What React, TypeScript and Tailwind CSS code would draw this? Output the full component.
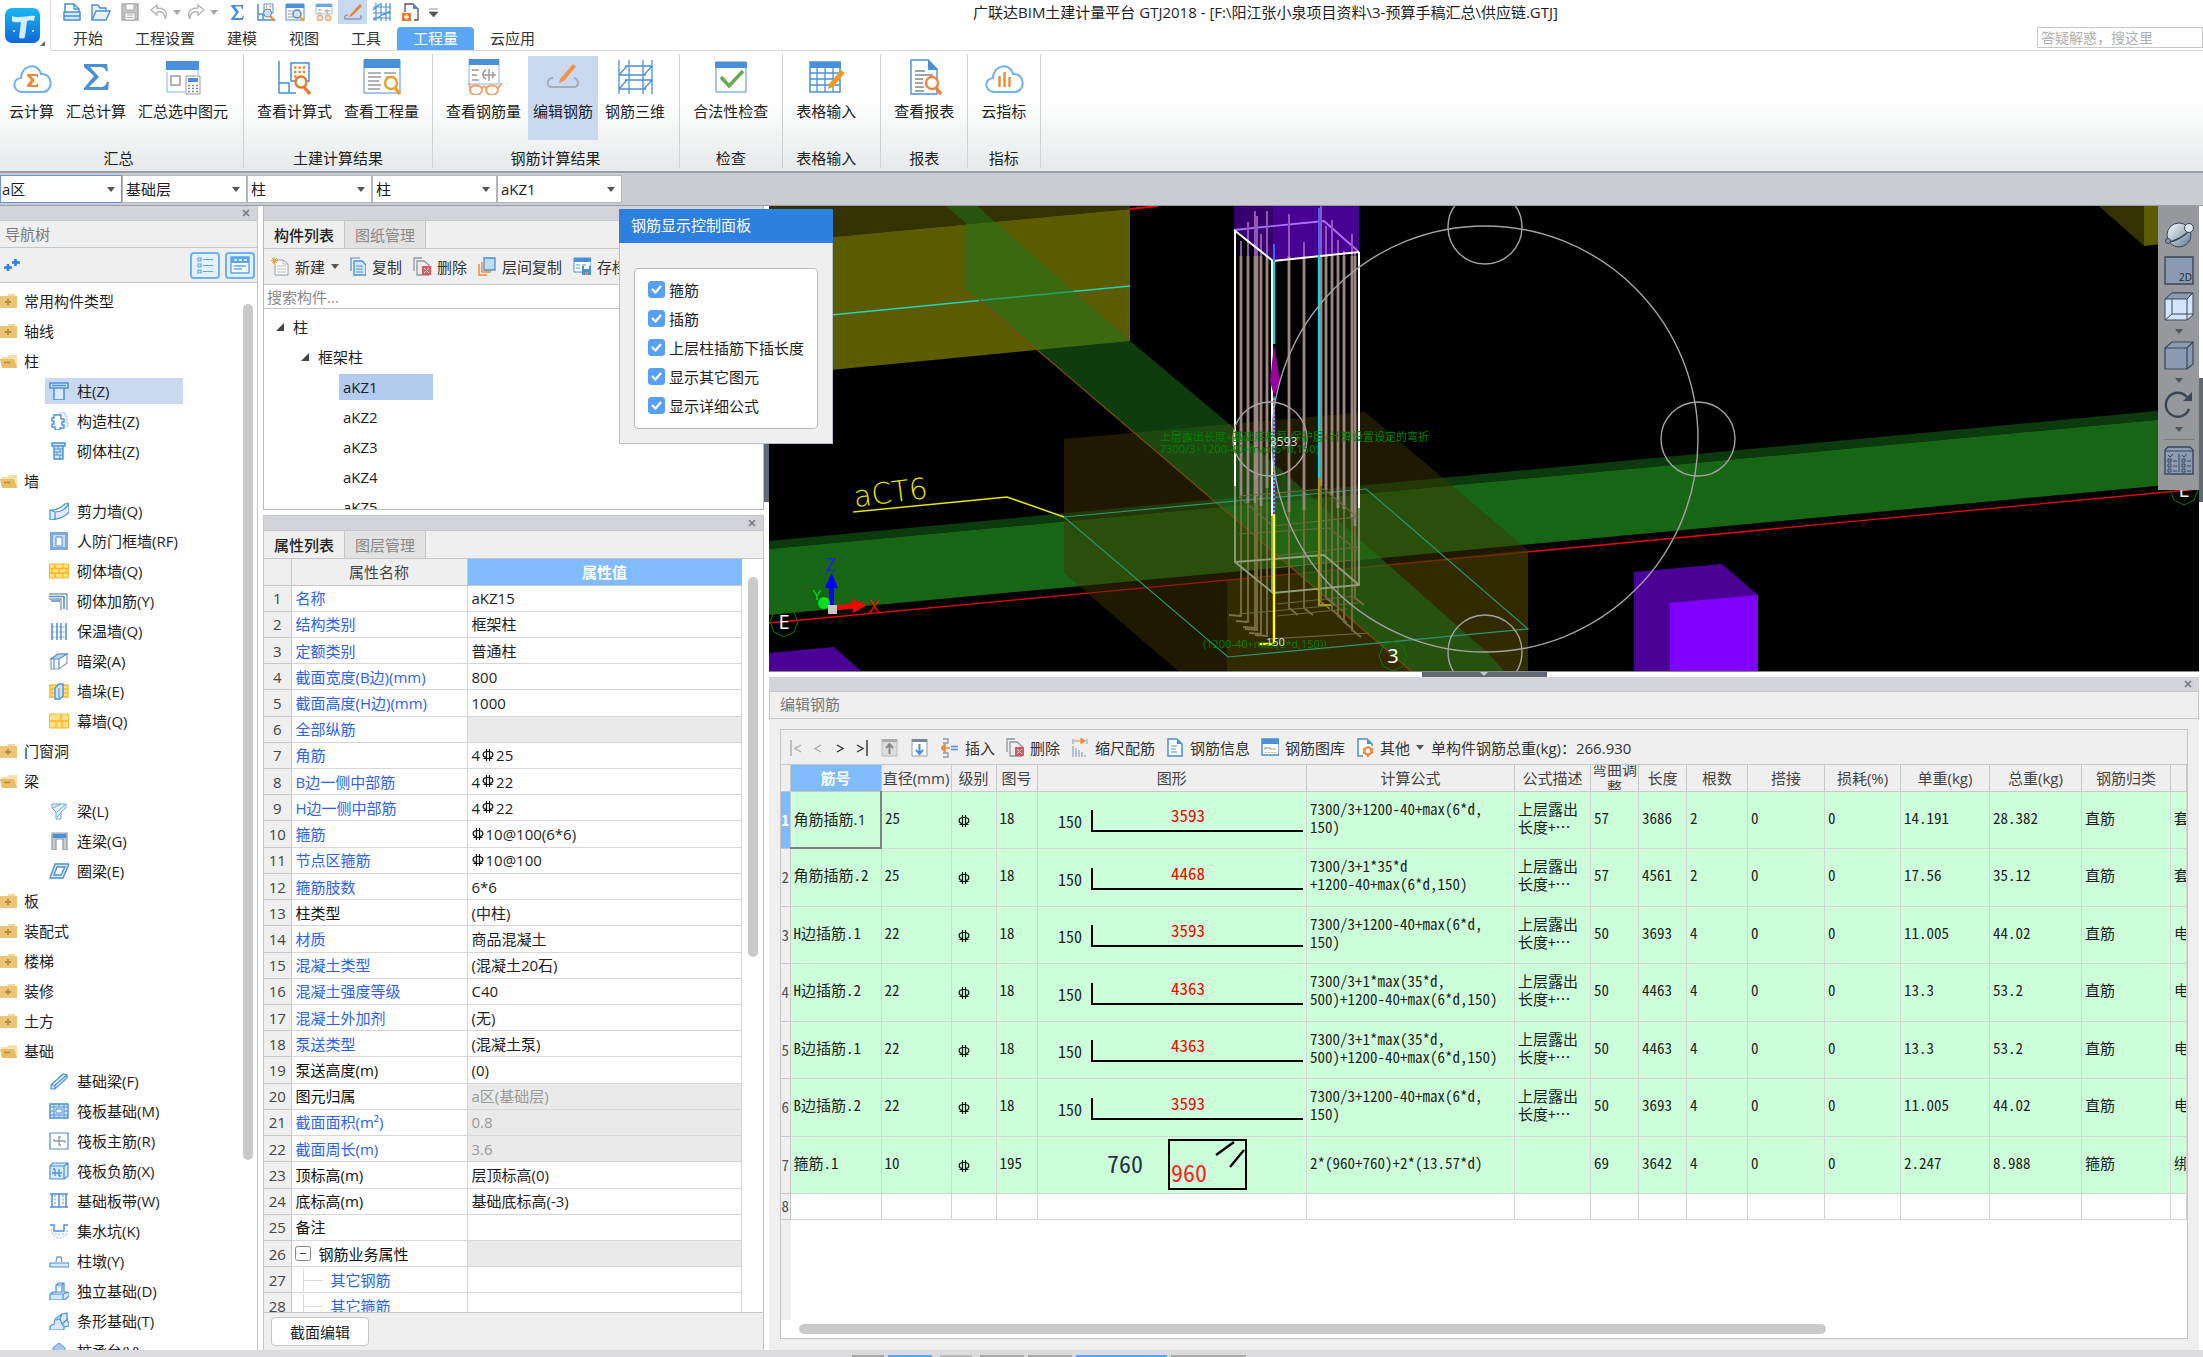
import { useState } from 'react'
import type { ReactNode } from 'react'

const BLUE = '#4a90d9'
const LIGHT = '#d6e8fb'
const ORANGE = '#f0883a'
const GRAY = '#8e99a3'

/* ---------- small shared parts ---------- */

interface SvgProps {
  w: number
  h: number
  children: ReactNode
  className?: string
}

function Svg({ w, h, children, className = '' }: SvgProps) {
  return (
    <svg width={w} height={h} viewBox={`0 0 ${w} ${h}`} fill="none" className={`shrink-0 ${className}`} aria-hidden="true">
      {children}
    </svg>
  )
}

function Caret({ className = '' }: { className?: string }) {
  return (
    <Svg w={8} h={5} className={className}>
      <path d="M0 0h8L4 5z" fill="#555" />
    </Svg>
  )
}

function PanelStrip({ closable = false }: { closable?: boolean }) {
  return (
    <div className="flex h-[15px] shrink-0 items-center justify-end border-b border-[#c3c7cc] bg-[#d3d4d9] pr-[7px]">
      {closable && (
        <button type="button" aria-label="关闭">
          <Svg w={8} h={8}>
            <path d="M1 1l6 6M7 1L1 7" stroke="#777" strokeWidth="1.6" />
          </Svg>
        </button>
      )}
    </div>
  )
}

/* ---------- title bar ---------- */

const quickIcons: Record<string, ReactNode> = {
  new: (
    <>
      <path d="M3 10V2h9l5 5v3" fill="#fff" stroke={BLUE} strokeWidth="1.5" />
      <path d="M12 2v5h5" stroke={BLUE} strokeWidth="1.4" />
      <path d="M2 10h16v8H2zM2 14h16" fill={LIGHT} stroke={BLUE} strokeWidth="1.5" />
    </>
  ),
  open: <path d="M1 18V3h6l2 3h6v3M1 18l4-9h14l-4 9z" fill="#e9f3fe" stroke={BLUE} strokeWidth="1.4" />,
  save: (
    <>
      <path d="M2 2h16v16H2z" fill="#c3c3c3" stroke="#aaa" strokeWidth="1.4" />
      <path d="M6 2h8v6H6zM5 11h10v7H5z" fill="#fff" stroke="#aaa" />
      <path d="M7 13h6M7 15.500h6" stroke="#aaa" />
    </>
  ),
  undo: <path d="M8 3L2 8l6 5v-3c5-1 8 1 8 7 3-6 1-11-8-11z" fill="#fff" stroke="#b3b3b3" strokeWidth="1.3" />,
  redo: <path d="M12 3l6 5-6 5v-3c-5-1-8 1-8 7-3-6-1-11 8-11z" fill="#fff" stroke="#b3b3b3" strokeWidth="1.3" />,
  sum: <path d="M4 3h12v4h-1l-1-2.500H8l4 5.500-4.500 6H15l1-2.500h1L16 18H4v-1l5-6.500L4 4z" fill={BLUE} />,
  formula: (
    <>
      <path d="M2 2v16h16M2 12h5v6" stroke={BLUE} strokeWidth="1.5" />
      <path d="M8 2h9v9H8z" fill="#fff" stroke={BLUE} />
      <path d="M10 4.500h1.500M13.500 4.500H15M10 7.500h1.500M13.500 7.500H15" stroke={ORANGE} strokeWidth="1.5" />
      <circle cx="11.500" cy="11" r="4" fill="#cfe1f5" stroke="#5b84b8" />
      <path d="M14 14l5 5" stroke={ORANGE} strokeWidth="2.400" />
    </>
  ),
  quantity: (
    <>
      <path d="M1 2h18v16H1z" fill="#fff" stroke={BLUE} />
      <path d="M1 2h18v4H1z" fill={BLUE} />
      <path d="M3 9h5M3 12h4M3 15h5" stroke="#99a" />
      <circle cx="12" cy="12" r="4" fill="#cfe1f5" stroke="#5b84b8" strokeWidth="1.5" />
      <path d="M15 15l4 4" stroke="#f0a020" strokeWidth="2.400" />
    </>
  ),
  rebar: (
    <>
      <path d="M2 2h16v10H2z" fill="#fff" stroke="#9bbde6" />
      <path d="M2 2h16v3H2z" fill="#6fa5e3" />
      <path d="M4 8h4M4 11h3M10 9h6M13 7v5" stroke="#999" />
      <circle cx="6" cy="16" r="2.500" stroke="#f5a773" strokeWidth="1.5" />
      <circle cx="14" cy="16" r="2.500" stroke="#f5a773" strokeWidth="1.5" />
    </>
  ),
  edit: (
    <>
      <path d="M7 13L17 2l2 2L9 14l-3 1z" fill="#ee7d33" />
      <path d="M5 13c-3 0-4 2-3 4h15c2-1 2-3 0-3" stroke={GRAY} strokeWidth="1.4" />
    </>
  ),
  grid: <path d="M4 1v18M9 1v18M14 1v18M18 1v18M1 5h18M1 11h18M1 16h18M1 8l7-6M1 18l17-9" stroke={BLUE} strokeWidth="1.2" />,
  addpage: (
    <>
      <path d="M4 10V2h8l5 5v11h-4" stroke="#456" strokeWidth="1.3" />
      <path d="M12 2v5h5z" fill={BLUE} />
      <path d="M1 11h9v8H1z" fill="#e9792e" />
      <path d="M5.500 12.500v5M3 15h5" stroke="#fff" strokeWidth="1.5" />
    </>
  )
}

function QuickButton({ name, label, active = false }: { name: string; label: string; active?: boolean }) {
  return (
    <button type="button" aria-label={label} className={`flex h-6 w-[29px] items-center justify-center ${active ? 'bg-[#c9d9f0]' : ''}`}>
      <Svg w={20} h={20}>{quickIcons[name]}</Svg>
    </button>
  )
}

function AppLogo() {
  return (
    <div className="flex h-[50px] w-[51px] shrink-0 items-end border-r border-[#ddd] pb-1 pl-1">
      <svg width="42" height="42" viewBox="0 0 42 42" aria-label="GTJ">
        <defs>
          <linearGradient id="logo" x1="0" y1="0" x2="0" y2="1">
            <stop offset="0" stopColor="#19b7f3" />
            <stop offset="1" stopColor="#0f68d8" />
          </linearGradient>
        </defs>
        <rect x="1" y="4" width="35" height="35" rx="7" fill="url(#logo)" />
        <path d="M8 12c7 3 16-1 23 0l-1 5c-3-1-5-1-7 0l-2 16c-1 2-5 2-6 0l2-15c-4 0-7 1-9-1z" fill="#e9f7ff" opacity=".9" />
        <circle cx="10" cy="27" r="1" fill="#fff" />
        <circle cx="29" cy="27" r="1" fill="#fff" />
        <path d="M41 37v5h-5z" fill="#666" />
      </svg>
    </div>
  )
}

const menuTabs = ['开始', '工程设置', '建模', '视图', '工具', '工程量', '云应用']

function TitleBar() {
  const [tab, setTab] = useState('工程量')
  return (
    <header className="flex shrink-0 bg-white">
      <AppLogo />
      <div className="min-w-0 flex-1 border-b border-[#d9dadb]">
        <div className="flex h-[27px] items-start pl-[6px]">
          <div className="flex w-[916px] shrink-0 items-center">
            <QuickButton name="new" label="新建" />
            <QuickButton name="open" label="打开" />
            <QuickButton name="save" label="保存" />
            <QuickButton name="undo" label="撤销" />
            <Caret className="opacity-50" />
            <QuickButton name="redo" label="恢复" />
            <Caret className="mr-1 opacity-50" />
            <QuickButton name="sum" label="汇总计算" />
            <QuickButton name="formula" label="查看计算式" />
            <QuickButton name="quantity" label="查看工程量" />
            <QuickButton name="rebar" label="查看钢筋量" />
            <QuickButton name="edit" label="编辑钢筋" active />
            <QuickButton name="grid" label="钢筋三维" />
            <QuickButton name="addpage" label="查看报表" />
            <Svg w={9} h={9} className="ml-1">
              <path d="M0 1h9M0 4h9L4.500 9z" stroke="#555" fill="#555" strokeWidth=".6" />
            </Svg>
          </div>
          <h1 className="truncate leading-6">广联达BIM土建计量平台 GTJ2018 - [F:\阳江张小泉项目资料\3-预算手稿汇总\供应链.GTJ]</h1>
        </div>
        <nav className="flex h-[23px] items-stretch pl-[6px]">
          {menuTabs.map((name) => (
            <button
              key={name}
              type="button"
              onClick={() => setTab(name)}
              className={`px-4 leading-[21px] ${tab === name ? 'rounded-t-sm bg-[#5ba6f8] text-white' : 'text-[#333]'}`}
            >
              {name}
            </button>
          ))}
          <input
            aria-label="搜索帮助"
            placeholder="答疑解惑，搜这里"
            className="ml-auto h-[21px] w-[166px] border border-[#c8c8c8] px-[3px] text-sm outline-none placeholder:text-[#b0b0b0]"
          />
        </nav>
      </div>
    </header>
  )
}

/* ---------- ribbon ---------- */

const cloud = <path d="M10 33c-10-1-10-13-1-14C9 7 25 2 29 15c12-1 13 17 2 18z" stroke="#6db0f5" strokeWidth="2" />

const ribbonIcons: Record<string, ReactNode> = {
  cloudSum: (
    <>
      {cloud}
      <path d="M15 15h11v4l-2-2h-5l4 4-4 5h5l2-2v4H15v-2l4-5-4-4z" fill={ORANGE} />
    </>
  ),
  sum: <path d="M8 5h23l1 7h-2c-1-3-3-4-5-4H14l9 10-10 10h12c3 0 5-2 6-5h2l-1 8H8v-2l10-12L8 8z" fill={BLUE} />,
  select: (
    <>
      <path d="M4 3h31v13M4 13v20h18" stroke="#8bb4e6" />
      <path d="M3 2h33v9H3z" fill={BLUE} />
      <path d="M8 17h9v9H8z" stroke="#999" strokeWidth="1.5" />
      <path d="M23 17h14v18H23z" fill="#fff" stroke="#999" />
      <path d="M25 19h10v4H25z" fill={BLUE} />
      <path d="M25 26.500h10M25 29.500h10M25 32.500h10" stroke="#888" strokeWidth="1.5" strokeDasharray="2 2" />
    </>
  ),
  formula: (
    <>
      <path d="M4 2v32h17M4 24h10v10M4 23v-4" stroke={BLUE} strokeWidth="1.5" />
      <path d="M16 4h18v18H16z" stroke={BLUE} strokeWidth="1.5" />
      <path d="M19 8.500h12M19 13h12M19 17.500h4" stroke={ORANGE} strokeWidth="2.400" strokeDasharray="2.400 2" />
      <circle cx="26" cy="23" r="5.500" fill="#fff" stroke="#e9792e" strokeWidth="2.400" />
      <path d="M29 28l6 7" stroke="#e9792e" strokeWidth="3.400" />
    </>
  ),
  quantity: (
    <>
      <path d="M2 1h36v33H2z" stroke={BLUE} />
      <path d="M2 0h36v9H2z" fill={BLUE} />
      <path d="M6 14h13M6 18h13M6 22h11M6 26h13M6 30h12M22 14h12M24 18h6" stroke="#999" strokeWidth="1.400" />
      <circle cx="29" cy="24" r="6" fill="#fff" stroke="#f09a20" strokeWidth="2.400" />
      <path d="M33 29l5 6" stroke="#f09a20" strokeWidth="3.400" />
    </>
  ),
  rebar: (
    <>
      <path d="M5 1h30v24H5z" stroke="#8bb4e6" />
      <path d="M5 0h30v6H5z" fill={BLUE} />
      <path d="M8 11h7M8 16h5M8 21h7M18 16h14M25 10v12M22 11c-4 2-4 7 0 9M28 13c2 1 2 4 0 6" stroke="#999" strokeWidth="1.400" />
      <path d="M6 31c0-6 12-6 12 0s-12 7-12 0zm16 0c0-6 12-6 12 0s-12 7-12 0zM18 29c1-2 3-2 4 0M6 29l-1-5M34 29l4-5" fill="#fff" stroke="#f5a06a" strokeWidth="2" />
    </>
  ),
  edit: (
    <>
      <path d="M17 20L30 5l3 2.500L21 22l-5 2z" fill="#f5924a" />
      <path d="M10 19c-6 0-7 8-2 9h24c4-1 4-8-1-9" stroke="#a5adb8" strokeWidth="2" />
    </>
  ),
  grid: (
    <path d="M4 1v34M14 1v34M28 1v34M37 1v34M10 7h27M4 16h27M10 21h27M4 30h27M4 16l8-9M29 16l8-9M4 30l8-9M29 30l8-9" stroke={BLUE} strokeWidth="1.300" />
  ),
  check: (
    <>
      <path d="M5 3h30v30H5z" fill="#fff" stroke={BLUE} />
      <path d="M4 3h32v6H4z" fill={BLUE} />
      <path d="M10 18l8 9 14-15" stroke="#6aaa4e" strokeWidth="3.500" />
    </>
  ),
  table: (
    <>
      <path d="M4 3h30v30H4z" fill="#fff" stroke={BLUE} strokeWidth="1.500" />
      <path d="M4 3h31v6H4z" fill={BLUE} />
      <path d="M4 14h30M4 20h30M4 26h30M11 9v24M19 9v24M27 9v24" stroke={BLUE} strokeWidth="1.300" />
      <path d="M23 25L35 11l4 3-12 14-5 2z" fill="#f09a20" />
    </>
  ),
  report: (
    <>
      <path d="M7 1h17l9 9v25H7z" fill="#fff" stroke={BLUE} strokeWidth="1.400" />
      <path d="M24 0v11h10z" fill={BLUE} />
      <path d="M11 12h10M11 16h18M11 20h8M11 24h8M11 28h9M11 32h9" stroke="#888" strokeWidth="1.400" />
      <circle cx="28" cy="24" r="6" fill="#fff" stroke="#f0823a" strokeWidth="2.400" />
      <path d="M32 29l5 6" stroke="#f0823a" strokeWidth="3.400" />
    </>
  ),
  cloudBars: (
    <>
      {cloud}
      <path d="M15.500 17v11M20.500 13v15M25.500 18v10" stroke={ORANGE} strokeWidth="2.400" />
    </>
  )
}

interface RibbonGroup {
  label: string
  className: string
  items: { icon: string; label: string }[]
}

const ribbonGroups: RibbonGroup[] = [
  {
    label: '汇总',
    className: 'pl-1 pr-[10px]',
    items: [
      { icon: 'cloudSum', label: '云计算' },
      { icon: 'sum', label: '汇总计算' },
      { icon: 'select', label: '汇总选中图元' }
    ]
  },
  {
    label: '土建计算结果',
    className: 'px-2',
    items: [
      { icon: 'formula', label: '查看计算式' },
      { icon: 'quantity', label: '查看工程量' }
    ]
  },
  {
    label: '钢筋计算结果',
    className: 'pl-2 pr-[9px]',
    items: [
      { icon: 'rebar', label: '查看钢筋量' },
      { icon: 'edit', label: '编辑钢筋' },
      { icon: 'grid', label: '钢筋三维' }
    ]
  },
  { label: '检查', className: 'pl-2 pr-[9px]', items: [{ icon: 'check', label: '合法性检查' }] },
  { label: '表格输入', className: 'pl-2 pr-[19px]', items: [{ icon: 'table', label: '表格输入' }] },
  { label: '报表', className: 'px-2', items: [{ icon: 'report', label: '查看报表' }] },
  { label: '指标', className: 'pl-2 pr-[9px]', items: [{ icon: 'cloudBars', label: '云指标' }] }
]

function Ribbon() {
  return (
    <div className="flex h-[120px] shrink-0 bg-linear-to-b from-white from-40% to-[#e6eaea]">
      {ribbonGroups.map((group) => (
        <section key={group.label} className={`my-[3px] flex flex-col border-r border-[#cdd0d2] pt-[2px] ${group.className}`}>
          <div className="flex gap-[2px]">
            {group.items.map((item) => (
              <button
                key={item.label}
                type="button"
                className={`flex h-[84px] flex-col items-center px-[5px] pt-[3px] ${item.icon === 'edit' ? 'bg-[#c9d9f0]' : ''}`}
              >
                <Svg w={40} h={36}>{ribbonIcons[item.icon]}</Svg>
                <span className="mt-[6px] leading-5 whitespace-nowrap">{item.label}</span>
              </button>
            ))}
          </div>
          <div className="mt-2 text-center leading-5">{group.label}</div>
        </section>
      ))}
    </div>
  )
}

const combos = [
  { label: '区域', value: 'a区' },
  { label: '楼层', value: '基础层' },
  { label: '构件大类', value: '柱' },
  { label: '构件类型', value: '柱' },
  { label: '构件', value: 'aKZ1' }
]

function ComboBar() {
  return (
    <div className="flex h-[35px] shrink-0 border-t-2 border-b border-[#989ea4] bg-[#c9ccd1] pt-[2px]">
      {combos.map((combo, i) => (
        <div key={combo.label} className={`relative h-[28px] ${i === 0 ? 'w-[122px]' : 'w-[125px]'}`}>
          <select
            aria-label={combo.label}
            defaultValue={combo.value}
            className={`size-full appearance-none border bg-white pr-5 outline-none ${i === 0 ? 'border-[#6f92dc] pl-[1px]' : 'border-[#b4b7ba] pl-[3px]'}`}
          >
            <option>{combo.value}</option>
          </select>
          <Caret className="pointer-events-none absolute top-3 right-[7px]" />
        </div>
      ))}
    </div>
  )
}

/* ---------- navigation tree ---------- */

const treeIcons: Record<string, ReactNode> = {
  column: <path d="M1 1h18v5H1zM5 6h10v12H5zM3 3.500h14" fill="#d9e7f8" stroke={BLUE} strokeWidth="1.500" />,
  tieColumn: (
    <>
      <path d="M9 1h7v3h2v4h-1v3h2v3h-3" stroke="#a8c8ee" />
      <path d="M5 3h7v4h3v3h-2v3h2v3h-4v2H6v-3H3v-3h2v-3H3V6h2z" fill="#fff" stroke={BLUE} strokeWidth="1.400" />
    </>
  ),
  brickColumn: (
    <>
      <path d="M3 1h13v3H3zM5 4h9v13H5z" fill={LIGHT} stroke={BLUE} strokeWidth="1.400" />
      <path d="M5 7h9M5 10h9M5 13h9M9 4v3M11 7v3M8 10v3M11 13v4" stroke={BLUE} />
    </>
  ),
  shearWall: <path d="M1 8c7 1 11-2 15-6l4-1v9c-4 5-9 7-19 8zM1 8l5 2c6 0 9-2 14-8M6 10v7" fill="#dfedfc" stroke={BLUE} strokeWidth="1.200" />,
  doorWall: (
    <>
      <path d="M1 0h18v18H1z" fill="#7fabe2" />
      <path d="M4 3h12v12H4z" fill="#c6dcf5" />
      <path d="M7 5h6v9H7z" fill="#fff" stroke={BLUE} />
    </>
  ),
  brickWall: (
    <>
      <path d="M.500 2h19v14H.500z" fill="#ffe08c" stroke="#fbb622" />
      <path d="M0 6.500h20M0 11h20M6 2v4.500M14 2v4.500M10 6.500V11M3 6.500V11M17 6.500V11M6 11v5M14 11v5" stroke="#fbb622" strokeWidth="1.400" />
    </>
  ),
  brickRebar: (
    <>
      <path d="M0 2h18v16M0 7h12v11" stroke={GRAY} strokeWidth="1.400" />
      <path d="M0 4.500h15V17M2 9h9" stroke={BLUE} strokeWidth="1.600" />
    </>
  ),
  insulation: (
    <>
      <path d="M3 1v17M8 1v17M12 1v17M17 1v17" stroke={BLUE} strokeWidth="1.500" />
      <path d="M3 5h14M3 10h14M3 15h14" stroke={BLUE} strokeDasharray="2 1.500" />
    </>
  ),
  hiddenBeam: (
    <>
      <path d="M2 7l7-5h9v9l-8 6H2z" fill="#fff" stroke={GRAY} strokeWidth="1.200" />
      <path d="M2 7l7-5h9l-8 5zM5 7v10M10 7v10" fill="#bcd7f5" stroke={BLUE} strokeWidth="1.200" />
    </>
  ),
  pier: (
    <>
      <path d="M1 3h18v12H1zM1 7h18M1 11h18" fill="#ffe08c" stroke="#fbb622" strokeWidth="1.400" />
      <path d="M6 6l4-4h4v12l-3 3H6z" fill="#cfe2f8" stroke={BLUE} strokeWidth="1.400" />
      <path d="M10 6v10" stroke={BLUE} />
    </>
  ),
  curtain: (
    <>
      <path d="M.500 2h19v14H.500z" fill="#ffe08c" stroke="#fbb622" />
      <path d="M0 9h20M12 2v7M7 9v7M13 9v7" stroke="#fbb622" strokeWidth="1.400" />
    </>
  ),
  beam: <path d="M3 2h14v4l-5 4v7H7v-7L3 6zM4 6l8-4M8 10l8-7M8 15l4-4" stroke="#6aa3e0" fill="#e6f1fd" />,
  linkBeam: (
    <>
      <path d="M3 1h15v17h-4V7H7v11H3z" fill="#c9ced3" stroke={GRAY} strokeWidth="1.200" />
      <path d="M4 2h13v4H4z" fill={BLUE} />
    </>
  ),
  ringBeam: <path d="M6 2h14l-6 14H1zM8 5h8l-4 8H5z" fill="#d9e9fb" stroke={BLUE} strokeWidth="1.400" fillRule="evenodd" />,
  foundBeam: <path d="M2 13L14 2l4 1v3L6 17H2zM2 13h4l12-10M6 13v4" fill={LIGHT} stroke={BLUE} strokeWidth="1.200" />,
  raft: (
    <>
      <path d="M1 2h18v14H1z" fill={LIGHT} stroke={BLUE} strokeWidth="1.400" />
      <path d="M1 5h18M1 13h18M5 2v14M15 2v14M10 2v3M10 13v3M1 9h4M15 9h4" stroke={BLUE} />
      <path d="M7 7h6v4H7z" fill="#fff" stroke={BLUE} />
    </>
  ),
  raftMain: (
    <>
      <path d="M1 1h18v16H1z" fill="#fff" stroke={BLUE} strokeWidth="1.200" />
      <path d="M5 9h11M10 5v8M12 5h-2v8h2M5 7v2M16 9v2" stroke={GRAY} strokeWidth="1.300" />
    </>
  ),
  raftNeg: (
    <>
      <path d="M1 4h14v13H1zM1 4l3-3h15v13l-4 3M15 4l4-3" fill={LIGHT} stroke={BLUE} strokeWidth="1.200" />
      <path d="M3 11h10M6 7v7M10 7v7M4 7h2M10 14h2" stroke={BLUE} strokeWidth="1.300" />
    </>
  ),
  strip: (
    <>
      <path d="M1 2h18M1 15h18M10 2v13M3 2v13M17 2v13" stroke={BLUE} strokeWidth="1.500" />
      <path d="M6 3v11M14 3v11" stroke={BLUE} strokeDasharray="2 1.500" />
    </>
  ),
  sump: (
    <>
      <path d="M1 3h4v6h10V3h4" stroke={BLUE} strokeWidth="1.500" />
      <path d="M2 7l2 6 4 3h5l4-3 2-6M6 12h9" stroke="#8fb2d8" strokeDasharray="2 1.500" />
    </>
  ),
  pedestal: (
    <>
      <path d="M7 10l1-5h4l1 5" stroke={GRAY} strokeWidth="1.300" />
      <path d="M1 11h19v4H1z" fill={LIGHT} stroke={BLUE} strokeWidth="1.200" />
    </>
  ),
  isolated: <path d="M1 12l3-2h3V3l3-2h5v9h3l2 1v3l-4 4H1zM1 12h13l5-2M7 10h6V3M14 12v6M7 3h6l2-2" fill={LIGHT} stroke={BLUE} strokeWidth="1.200" />,
  stripFound: <path d="M1 18v-4l4-2 1-5 7-5 5-1v7l2 3v3l-5 1v3zM13 2l-2 5-4 1M11 7l2 5 2 2M13 12l6-5" fill={LIGHT} stroke={BLUE} strokeWidth="1.200" />,
  cap: <path d="M10 1l6 5v8H4V6z" fill="#a9cbf1" stroke={BLUE} />
}

interface NavNode {
  label: string
  open?: boolean
  children?: [string, string][]
}

const navTree: NavNode[] = [
  { label: '常用构件类型' },
  { label: '轴线' },
  { label: '柱', open: true, children: [['column', '柱(Z)'], ['tieColumn', '构造柱(Z)'], ['brickColumn', '砌体柱(Z)']] },
  {
    label: '墙',
    open: true,
    children: [
      ['shearWall', '剪力墙(Q)'],
      ['doorWall', '人防门框墙(RF)'],
      ['brickWall', '砌体墙(Q)'],
      ['brickRebar', '砌体加筋(Y)'],
      ['insulation', '保温墙(Q)'],
      ['hiddenBeam', '暗梁(A)'],
      ['pier', '墙垛(E)'],
      ['curtain', '幕墙(Q)']
    ]
  },
  { label: '门窗洞' },
  { label: '梁', open: true, children: [['beam', '梁(L)'], ['linkBeam', '连梁(G)'], ['ringBeam', '圈梁(E)']] },
  { label: '板' },
  { label: '装配式' },
  { label: '楼梯' },
  { label: '装修' },
  { label: '土方' },
  {
    label: '基础',
    open: true,
    children: [
      ['foundBeam', '基础梁(F)'],
      ['raft', '筏板基础(M)'],
      ['raftMain', '筏板主筋(R)'],
      ['raftNeg', '筏板负筋(X)'],
      ['strip', '基础板带(W)'],
      ['sump', '集水坑(K)'],
      ['pedestal', '柱墩(Y)'],
      ['isolated', '独立基础(D)'],
      ['stripFound', '条形基础(T)'],
      ['cap', '桩承台(V)']
    ]
  }
]

function Folder({ open = false }: { open?: boolean }) {
  return (
    <Svg w={18} h={16}>
      {open ? (
        <>
          <path d="M1 4h6l2-2h8v13H3z" fill="#f6dfab" />
          <path d="M0 6h14l3 9H2z" fill="#e9bd68" />
          <path d="M4 9.500h6" stroke="#b98b34" strokeWidth="1.500" />
        </>
      ) : (
        <>
          <path d="M8 1h7v3H8z" fill="#f3d79a" />
          <path d="M0 3h17v12H0z" fill="#ecc478" />
          <path d="M8 6v6M5 9h6" stroke="#b98b34" strokeWidth="1.800" />
        </>
      )}
    </Svg>
  )
}

function NavigationPanel() {
  const [selected, setSelected] = useState('柱(Z)')
  return (
    <aside className="flex w-[258px] shrink-0 flex-col border-r border-[#c3c7cc] bg-white">
      <PanelStrip closable />
      <h2 className="h-[27px] shrink-0 border-b border-[#c3c7cc] bg-[#efefef] pl-[5px] leading-[26px] text-[#7a7a7a]">导航树</h2>
      <div className="flex h-[35px] shrink-0 items-center gap-[5px] border-b border-[#c3c7cc] bg-[#efefef] pr-[2px] pl-1">
        <button type="button" aria-label="展开" className="mr-auto">
          <Svg w={16} h={14}>
            <path d="M4 6v7M0 9.500h8M11.500 1v7M8 4.500h8" stroke="#2f7fe0" strokeWidth="2.600" />
          </Svg>
        </button>
        <button type="button" aria-label="列表" className="flex h-[27px] w-[30px] items-center justify-center rounded-[4px] border-2 border-[#6db0f5] bg-[#e4f0fd]">
          <Svg w={16} h={17}>
            <path d="M1 1h3v3H1zM1 7h3v3H1zM1 13h3v3H1zM6 2.500h10M6 8.500h10M6 14.500h10" stroke="#5ba6f8" strokeWidth="1.200" />
          </Svg>
        </button>
        <button type="button" aria-label="图标" className="flex h-[27px] w-[30px] items-center justify-center rounded-[4px] border-2 border-[#6db0f5] bg-[#e4f0fd]">
          <Svg w={20} h={18}>
            <path d="M1 1h18v16H1z" fill="#fff" stroke="#5ba6f8" strokeWidth="1.500" />
            <path d="M1 1h18v6H1z" fill="#5ba6f8" />
            <path d="M4 4h3M9 4h3M14 4h3" stroke="#fff" strokeWidth="1.500" />
            <path d="M4 10h12M4 13h8" stroke="#5ba6f8" strokeWidth="1.300" />
          </Svg>
        </button>
      </div>
      <div className="flex min-h-0 flex-1">
        <ul className="flex-1 overflow-hidden pt-[3px]">
          {navTree.map((node) => (
            <li key={node.label}>
              <button type="button" className="flex h-[30px] items-center gap-[6px]">
                <Folder open={node.open} />
                {node.label}
              </button>
              {node.children?.map(([icon, label]) => (
                <div key={label} className="flex h-[30px] items-center pl-[45px]">
                  <button
                    type="button"
                    onClick={() => setSelected(label)}
                    className={`flex h-[26px] w-[138px] items-center gap-[8px] pl-1 ${selected === label ? 'bg-[#c9d9f0]' : ''}`}
                  >
                    <Svg w={20} h={18}>{treeIcons[icon]}</Svg>
                    {label}
                  </button>
                </div>
              ))}
            </li>
          ))}
        </ul>
        <div className="mt-[21px] mr-1 h-[856px] w-[10px] rounded-full bg-[#cacaca]" />
      </div>
    </aside>
  )
}

/* ---------- component list + properties ---------- */

const toolIcons: Record<string, ReactNode> = {
  create: (
    <>
      <path d="M4 3h8l5 4v11H4z" fill="#fff" stroke={GRAY} />
      <path d="M12 3v4h5M6 9h9M6 12h9M6 15h9" stroke="#bbb" />
      <path d="M3 0v7M0 3.500h7M1 1l5 5M6 1L1 6" stroke="#f09a20" />
    </>
  ),
  copy: (
    <>
      <path d="M1 14V1h9" stroke={BLUE} strokeWidth="1.200" />
      <path d="M4 4h8l4 4v10H4z" fill={LIGHT} stroke={BLUE} strokeWidth="1.400" />
      <path d="M6 9h7M6 12h7M6 15h7" stroke={BLUE} />
    </>
  ),
  remove: (
    <>
      <path d="M1 14V1h8M4 4h7l5 4v10H4z" stroke={GRAY} strokeWidth="1.300" />
      <path d="M9 9h9v9H9z" fill="#e8545c" />
      <path d="M11 11l5 5M16 11l-5 5" stroke="#fff" />
    </>
  ),
  layers: (
    <>
      <path d="M1 7v11h8M4 5v10h9" stroke={ORANGE} strokeWidth="1.400" />
      <path d="M6 1h11v12H6z" fill="#bfdcfb" stroke={BLUE} strokeWidth="1.300" />
    </>
  ),
  archive: (
    <>
      <path d="M1 1h17v14H1z" fill="#fff" stroke={BLUE} />
      <path d="M1 1h17v4H1z" fill={BLUE} />
      <path d="M3 8h4M3 11h4M9 8h4" stroke={BLUE} />
      <path d="M9 9h9v9H9z" fill={BLUE} />
      <path d="M11 9h5v3h-5z" fill="#fff" />
      <path d="M12 15h3v3h-3z" fill={ORANGE} />
    </>
  ),
  insert: (
    <>
      <path d="M2 1h5v4H2M2 15h5v4H2" stroke={GRAY} strokeWidth="1.300" />
      <path d="M0 10l4-3.500v7zM3 10h6" fill={ORANGE} stroke={ORANGE} strokeWidth="1.500" />
      <path d="M10 8.500h7M10 11.500h7" stroke={BLUE} strokeWidth="1.500" />
    </>
  ),
  scale: (
    <>
      <path d="M2 1v5M2 8v11M5 10v9M8 12v7M11 14v5M14 17v2" stroke="#8fa3bd" strokeWidth="1.200" />
      <path d="M3 3h9M10 .500l4 2.500-4 2.500z" stroke={ORANGE} fill={ORANGE} strokeWidth="1.200" />
      <path d="M16 1v5" stroke="#8fa3bd" />
    </>
  ),
  info: (
    <>
      <path d="M2 1h9l5 5v12H2z" fill="#fff" stroke={BLUE} strokeWidth="1.500" />
      <path d="M11 1v5h5z" fill={BLUE} />
      <path d="M5 8h6M5 11h5M5 14h6" stroke={BLUE} />
    </>
  ),
  library: (
    <>
      <path d="M1 1h17v16H1z" fill="#fff" stroke={BLUE} strokeWidth="1.500" />
      <path d="M1 1h17v5H1z" fill={BLUE} />
      <path d="M4 9v3M4 10h5M9 9v2h6" stroke={GRAY} />
      <path d="M4 14.500h12" stroke="#f0b060" strokeDasharray="2 1" />
    </>
  ),
  other: (
    <>
      <path d="M16 8V6l-5-5H2v17h5" fill="#fff" stroke={BLUE} strokeWidth="1.500" />
      <path d="M11 1v5h5z" fill={BLUE} />
      <circle cx="12" cy="13" r="3.500" stroke="#f0883a" strokeWidth="2.200" />
      <path d="M12 8v2M12 17v2M7 11l2 1M15 14l2 1M7 15l2-1M15 12l2-1" stroke="#f0883a" strokeWidth="2" />
    </>
  )
}

function ToolButton({ icon, label, caret = false }: { icon: string; label: string; caret?: boolean }) {
  return (
    <button type="button" className="flex shrink-0 items-center gap-[6px] whitespace-nowrap text-[#333]">
      <Svg w={icon === 'copy' ? 16 : 18} h={20}>{toolIcons[icon]}</Svg>
      {label}
      {caret && <Caret />}
    </button>
  )
}

function PanelTabs({ tabs }: { tabs: string[] }) {
  return (
    <div className="flex h-7 shrink-0 border-b border-[#c3c7cc] bg-[#efefef]">
      {tabs.map((name, i) => (
        <button
          key={name}
          type="button"
          className={`w-[81px] border-r border-[#c3c7cc] ${i === 0 ? 'font-medium text-[#222]' : 'bg-[#e2e2e2] text-[#888]'}`}
        >
          {name}
        </button>
      ))}
    </div>
  )
}

function TreeArrow() {
  return (
    <Svg w={8} h={8}>
      <path d="M8 0v8H0z" fill="#444" />
    </Svg>
  )
}

function ComponentListPanel() {
  return (
    <section className="flex h-[304px] shrink-0 flex-col border border-t-0 border-[#b8bcc0] bg-white">
      <PanelStrip />
      <PanelTabs tabs={['构件列表', '图纸管理']} />
      <div className="flex h-9 shrink-0 items-center gap-[11px] overflow-hidden border-b border-[#c3c7cc] bg-[#efefef] pl-[7px]">
        <ToolButton icon="create" label="新建" caret />
        <ToolButton icon="copy" label="复制" />
        <ToolButton icon="remove" label="删除" />
        <ToolButton icon="layers" label="层间复制" />
        <ToolButton icon="archive" label="存档" caret />
      </div>
      <input
        aria-label="搜索构件"
        placeholder="搜索构件..."
        className="h-6 w-full shrink-0 border-b border-[#c3c7cc] bg-white px-[3px] outline-none placeholder:text-[#8a8a8a]"
      />
      <ul className="min-h-0 flex-1 overflow-hidden pt-[3px] leading-[30px]">
        <li className="flex h-[30px] items-center gap-[9px] pl-3"><TreeArrow />柱</li>
        <li className="flex h-[30px] items-center gap-[9px] pl-[37px]"><TreeArrow />框架柱</li>
        {['aKZ1', 'aKZ2', 'aKZ3', 'aKZ4', 'aKZ5'].map((name) => (
          <li key={name} className="flex h-[30px] items-center pl-[75px]">
            <button type="button" className={`h-[26px] w-[94px] pl-1 text-left leading-[25px] ${name === 'aKZ1' ? 'bg-[#b3ccee]' : ''}`}>
              {name}
            </button>
          </li>
        ))}
      </ul>
    </section>
  )
}

/** HRB400 grade mark: a circle crossed by two strokes, with a foot bar */
function GradeMark() {
  return (
    <svg width="12" height="13" viewBox="0 0 12 13" fill="none" stroke="#111" strokeWidth="1.200" className="inline-block" aria-label="HRB400">
      <path d="M4.500 2.500C0 3 0 8 4.500 8.500M7.500 2.500C12 3 12 8 7.500 8.500M4.500 2.500h3" />
      <path d="M4.500 0v12M7.500 0v12M1.500 9.500h9" />
    </svg>
  )
}

interface Property {
  name: string
  value?: string
  // 'k' marks the plain black private properties
  tone?: 'k'
  off?: boolean
  level?: number
}

const properties: Property[] = [
  { name: '名称', value: 'aKZ15' },
  { name: '结构类别', value: '框架柱' },
  { name: '定额类别', value: '普通柱' },
  { name: '截面宽度(B边)(mm)', value: '800' },
  { name: '截面高度(H边)(mm)', value: '1000' },
  { name: '全部纵筋', off: true },
  { name: '角筋', value: '4$25' },
  { name: 'B边一侧中部筋', value: '4$22' },
  { name: 'H边一侧中部筋', value: '4$22' },
  { name: '箍筋', value: '$10@100(6*6)' },
  { name: '节点区箍筋', value: '$10@100' },
  { name: '箍筋肢数', value: '6*6' },
  { name: '柱类型', value: '(中柱)', tone: 'k' },
  { name: '材质', value: '商品混凝土' },
  { name: '混凝土类型', value: '(混凝土20石)' },
  { name: '混凝土强度等级', value: 'C40' },
  { name: '混凝土外加剂', value: '(无)' },
  { name: '泵送类型', value: '(混凝土泵)' },
  { name: '泵送高度(m)', value: '(0)', tone: 'k' },
  { name: '图元归属', value: 'a区(基础层)', tone: 'k', off: true },
  { name: '截面面积(m²)', value: '0.8', off: true },
  { name: '截面周长(m)', value: '3.6', off: true },
  { name: '顶标高(m)', value: '层顶标高(0)', tone: 'k' },
  { name: '底标高(m)', value: '基础底标高(-3)', tone: 'k' },
  { name: '备注', tone: 'k' },
  { name: '钢筋业务属性', tone: 'k', off: true, level: 1 },
  { name: '其它钢筋', level: 2 },
  { name: '其它箍筋', level: 2 }
]

function PropertyValue({ value }: { value: string }) {
  if (!value.includes('$')) return <>{value}</>
  const [before, after] = value.split('$')
  return (
    <span className="flex items-center gap-[2px]">
      {before}
      <GradeMark />
      {after}
    </span>
  )
}

function PropertyPanel() {
  return (
    <section className="flex min-h-0 flex-1 flex-col border-x border-t border-[#c3c7cc] bg-[#efefef]">
      <PanelStrip closable />
      <PanelTabs tabs={['属性列表', '图层管理']} />
      <div className="flex min-h-0 flex-1 overflow-hidden border-b border-[#c3c7cc] bg-white">
        <table className="h-[761px] flex-1 table-fixed border-collapse">
          <colgroup>
            <col className="w-[27px]" />
            <col className="w-[176px]" />
            <col />
          </colgroup>
          <thead>
            <tr className="h-[26px] bg-[#efefef] text-[#444]">
              <th className="border-r border-b border-[#c8c8c8]" aria-label="序号" />
              <th className="border-r border-b border-[#c8c8c8] p-0 font-normal">属性名称</th>
              <th className="border-b border-[#c8c8c8] bg-[#80bbfb] p-0 font-bold text-white">属性值</th>
            </tr>
          </thead>
          <tbody>
            {properties.map((p, i) => (
              <tr key={p.name} className="h-[26px]">
                <td className="border-r border-b border-[#c8c8c8] bg-[#efefef] p-0 text-center leading-6 text-[#444]">{i + 1}</td>
                <td className={`border-r border-b border-[#d6d6d6] p-0 pl-1 leading-6 ${p.tone ? 'text-[#111]' : 'text-[#2b62f0]'}`}>
                  <span className="flex items-center">
                    {p.level === 1 && (
                      <Svg w={16} h={16} className="mr-2 -ml-px">
                        <rect x=".500" y=".500" width="15" height="14" rx="2" stroke="#888" />
                        <path d="M5 7.500h6" stroke="#444" />
                      </Svg>
                    )}
                    {p.level === 2 && (
                      <Svg w={28} h={24} className="mr-[7px]">
                        <path d="M7.500 0v24M7.500 12.500H27" stroke="#ddd" />
                      </Svg>
                    )}
                    {p.name}
                  </span>
                </td>
                <td className={`border-r border-b border-[#d6d6d6] p-0 pl-1 leading-6 ${p.off ? 'bg-[#eaeaea] text-[#999]' : ''}`}>
                  {p.value && <PropertyValue value={p.value} />}
                </td>
              </tr>
            ))}
          </tbody>
        </table>
        <div className="flex w-[21px] shrink-0 justify-center pt-[18px]">
          <div className="h-[380px] w-[10px] rounded-full bg-[#cacaca]" />
        </div>
      </div>
      <div className="flex h-[37px] shrink-0 items-center pl-[7px]">
        <button type="button" className="h-[29px] w-[98px] rounded-[4px] border border-[#c8c8c8] bg-white">截面编辑</button>
      </div>
    </section>
  )
}

/* ---------- 3D view ---------- */

// x of each bar, and where it starts, fades and ends
const bars: [number, number, number, number][] = [
  [472, 35, 290, 410],
  [479, 16, 297, 416],
  [486, 5, 297, 422],
  [488, 10, 290, 424],
  [492, 28, 300, 428],
  [498, 5, 282, 430],
  [520, 8, 306, 402],
  [535, 36, 304, 402],
  [552, 0, 280, 396],
  [557, 20, 284, 392],
  [563, 14, 290, 404],
  [569, 34, 302, 410],
  [575, 45, 303, 416],
  [583, 28, 312, 424],
  [586, 46, 320, 392]
]

const ringPoints: [number, number][] = [[716, 21], [929, 233], [501, 233], [716, 446]]

function AxisBubble({ x, y, label }: { x: number; y: number; label: string }) {
  return (
    <g>
      <polygon
        points={`${x},${y - 15} ${x + 10},${y - 10} ${x + 14},${y} ${x + 10},${y + 10} ${x},${y + 15} ${x - 10},${y + 10} ${x - 14},${y} ${x - 10},${y - 10}`}
        stroke="#0a7a0a"
        fill="none"
      />
      <text x={x} y={y + 7} fontSize="20" fill="#fff" textAnchor="middle">{label}</text>
    </g>
  )
}

function Scene() {
  return (
    <svg viewBox="0 0 1430 465" preserveAspectRatio="xMinYMin slice" className="size-full" aria-label="三维视图">
      <rect width="1430" height="465" fill="#000" />
      {/* slabs */}
      <polygon points="0,0 361,0 361,3 0,37" fill="#333200" />
      <polygon points="0,37 361,3 361,135 0,170" fill="#5b5b00" />
      <path d="M361 3l28-3" stroke="#e00000" strokeWidth="2" />
      <polygon points="1330,0 1375,0 1375,40" fill="#333200" />
      <polygon points="1375,0 1430,0 1430,34 1375,40" fill="#5b5b00" />
      {/* ground beam */}
      <polygon points="0,335 1430,201 1430,210 0,343" fill="#0c3a0e" />
      <polygon points="0,343 1430,210 1430,276 0,409" fill="#166616" />
      <path d="M0 417L1430 283" stroke="#f00000" strokeWidth="1.300" />
      <path d="M0 115L361 80" stroke="#20d8b8" strokeWidth="1.500" />
      {/* footing */}
      <polygon points="295,233 596,206 759,344 759,465 409,465 295,367" fill="rgb(64,53,0)" fillOpacity=".47" />
      <polygon points="458,374 759,344 759,465 458,465" fill="rgb(80,67,0)" fillOpacity=".4" />
      {/* diagonal beam */}
      <polygon points="177,0 208,0 361,135 465,222 719,447 735,465 642,465 458,306 270,145 210,94 197,84 197,17" fill="rgb(28,120,30)" fillOpacity=".5" />
      <path d="M210 94L458 306L642 465" stroke="#7a4a10" strokeWidth="1.200" fill="none" />
      <polygon points="295,311 597,283 759,423 459,451" stroke="#2a9676" strokeWidth="1.200" fill="none" />
      <path d="M84 306L238 291L295 311" stroke="#e6e600" strokeWidth="1.500" fill="none" />
      <text x="86" y="301" fontSize="29" fontWeight="200" fontFamily="DejaVu Sans" fill="#e6e600" transform="rotate(-7 86 301)">aCT6</text>
      {/* column */}
      <polygon points="465,0 504,0 504,55 465,24" fill="#35006b" />
      <polygon points="504,0 590,0 590,46 504,55" fill="#480090" />
      <path d="M465 24L555 15L590 46" stroke="#b070ff" strokeWidth="1.800" fill="none" />
      {bars.map(([x, top, fade, end]) => (
        <g key={x}>
          <path d={`M${x} ${top}V55`} stroke="#9355b8" strokeWidth="2" />
          <path d={`M${x} 50V${fade}`} stroke="#9c8681" strokeWidth="2.800" />
          <path d={`M${x} ${fade}V${end}l${x < 500 ? -12 : 9} ${x < 500 ? -1 : 7}`} stroke="#7a7042" strokeWidth="1.800" fill="none" />
        </g>
      ))}
      <path d="M470 290l85-7 33 28-84 9-34-29M470 328l90-6 28 22M470 408l35-3 84-8M505 350l84-9M505 362l80-8M508 398l78-8M508 410l70-7M500 433l100-6" stroke="#6b6a3c" strokeWidth="1.200" fill="none" />
      <path d="M465 24L504 55L590 46M466 24V280M503 55V310M590 46V302" stroke="#fff" strokeWidth="2" fill="none" />
      <path d="M466 280V356L504 387L590 379V302M466 356L555 349L590 379M503 310V387" stroke="#92a07a" strokeWidth="1.800" fill="none" />
      <path d="M505 38V55M550 2V49" stroke="#3f66ff" strokeWidth="2" />
      <path d="M505 55V138M550 49V272" stroke="#00dce6" strokeWidth="2.200" />
      <path d="M505 138L511 175L505 190L501 175Z" fill="#9a009a" />
      <path d="M505 190V308" stroke="#20d0ff" strokeWidth="2" />
      <path d="M505 190V308" stroke="#a020c0" strokeWidth="2" strokeDasharray="2 2" />
      <path d="M505 308V438M505 438h-15" stroke="#ffff00" strokeWidth="2.400" />
      <path d="M550 272V399h12" stroke="#a09a10" strokeWidth="2.200" fill="none" />
      {/* purple piers */}
      <polygon points="0,447 65,441 92,465 0,465" fill="#4b0096" />
      <polygon points="865,366 953,358 989,389 989,465 865,465" fill="#4b0096" />
      <polygon points="901,397 989,389 989,465 901,465" fill="#8000ff" />
      {/* orbit ring */}
      <circle cx="716" cy="233" r="213" stroke="#a3a3a3" strokeWidth="1.400" fill="none" />
      {ringPoints.map(([x, y]) => (
        <circle key={`${x}-${y}`} cx={x} cy={y} r="37" stroke="#a3a3a3" strokeWidth="1.400" fill="none" />
      ))}
      <g fill="#008200">
        <text x="391" y="235" fontSize="11">上层露出长度+基础底板厚-保护层+计算设置设定的弯折</text>
        <text x="391" y="247" fontSize="11">7300/3+1200-40+max(6*d,150)</text>
        <text x="434" y="442" fontSize="11">(1200-40+max(6*d,150))</text>
      </g>
      <text x="501" y="240" fontSize="12" fill="#ddd">3593</text>
      <text x="497" y="440" fontSize="11" fill="#ddd">150</text>
      <AxisBubble x={15} y={416} label="E" />
      <AxisBubble x={624} y={450} label="3" />
      <AxisBubble x={1415} y={284} label="E" />
      {/* axis gizmo */}
      <path d="M62.500 402V380M58 381" stroke="#0000ff" strokeWidth="5" />
      <polygon points="62.500,367 69,382 56,382" fill="#0000ff" />
      <path d="M66 402L84 400" stroke="#f00" strokeWidth="5" />
      <polygon points="98,399 83,393 84,407" fill="#f00" />
      <circle cx="55" cy="397" r="6" fill="#00e020" />
      <rect x="59" y="399" width="9" height="9" fill="#c8c8c8" />
      <text x="62" y="365" fontSize="18" fill="#2020ff" textAnchor="middle">Z</text>
      <text x="105" y="407" fontSize="19" fill="#f00" textAnchor="middle">X</text>
      <text x="48" y="394" fontSize="15" fill="#00e020" textAnchor="middle">Y</text>
    </svg>
  )
}

const INK = '#3b4654'

const viewTools: { label: string; caret?: boolean; icon: ReactNode }[] = [
  {
    label: '动态观察',
    icon: (
      <>
        <defs>
          <linearGradient id="ball" x1="0" y1="0" x2="1" y2="1">
            <stop offset="0" stopColor="#fff" />
            <stop offset="1" stopColor="#5f7794" />
          </linearGradient>
        </defs>
        <ellipse cx="15" cy="15" rx="12" ry="12" fill="url(#ball)" stroke={INK} />
        <path d="M3 21c4 3 20-6 22-11" stroke={INK} strokeWidth="1.500" />
        <circle cx="25" cy="8" r="4.500" fill="#dbe4ee" stroke={INK} />
        <circle cx="4" cy="21" r="2.500" fill="#8698b0" stroke={INK} />
      </>
    )
  },
  {
    label: '二维',
    icon: (
      <>
        <path d="M1 1h28v27H1z" fill="#8a9bb3" stroke={INK} strokeWidth="1.400" />
        <text x="15" y="25" fontSize="10" fill="#222">2D</text>
      </>
    )
  },
  {
    label: '视图方向',
    caret: true,
    icon: (
      <>
        <path d="M1 7l7-6h21v22l-6 5H1z" fill="#d2e6fb" stroke={INK} />
        <path d="M1 7l7-6h21l-6 6z" fill="#8a9bb3" stroke={INK} />
        <path d="M23 7v21M8 7v15h21M8 22l-7 6" stroke={INK} />
      </>
    )
  },
  {
    label: '视觉样式',
    caret: true,
    icon: (
      <>
        <path d="M1 7l7-6h21v22l-6 5H1z" fill="#8a9bb3" stroke={INK} strokeWidth="1.200" />
        <path d="M1 7h22l6-6M23 7v21" stroke={INK} strokeWidth="1.200" />
      </>
    )
  },
  {
    label: '旋转',
    caret: true,
    icon: (
      <>
        <path d="M25 19A12 12 0 1 1 23 7" stroke={INK} strokeWidth="2.400" />
        <path d="M28 2v9h-9z" fill={INK} />
      </>
    )
  },
  {
    label: '显示设置',
    icon: (
      <>
        <path d="M1 4l3-3h22l3 3v24H1z" fill="#8a9bb3" stroke={INK} strokeWidth="1.400" />
        <path d="M1 5h28M15 8v18M4 9l2 2 3-3M18 9l2 2 3-3" stroke={INK} />
        <path d="M4 13h3v3H4zM4 18h3v3H4zM4 23h3v3H4zM18 13h3v3h-3zM18 18h3v3h-3zM18 23h3v3h-3zM9 15h4M9 20h4M9 25h4M23 15h4M23 20h4M23 25h4" stroke={INK} />
      </>
    )
  }
]

function ViewToolbar() {
  return (
    <div className="absolute top-0 right-0 flex h-[284px] w-[41px] flex-col items-center gap-[7px] bg-[#97989c] pt-[14px]">
      {viewTools.map((tool, i) => (
        <div key={tool.label} className={`flex flex-col items-center ${i === 5 ? 'border-t border-[#7c7d76] pt-[6px]' : ''}`}>
          <button type="button" aria-label={tool.label} className="block">
            <Svg w={30} h={29} className="block">{tool.icon}</Svg>
          </button>
          {tool.caret && <Caret className="mt-2" />}
        </div>
      ))}
    </div>
  )
}

/* ---------- rebar editor ---------- */

type RebarRow = [string, string, string, string, string, string, string, string, string, string, string]

const rebarRows: RebarRow[] = [
  // name, dia, shape no., length label, formula, bend, length, count, unit kg, total kg, joint
  ['角筋插筋.1', '25', '18', '3593', '7300/3+1200-40+max(6*d,\n150)', '57', '3686', '2', '14.191', '28.382', '套'],
  ['角筋插筋.2', '25', '18', '4468', '7300/3+1*35*d\n+1200-40+max(6*d,150)', '57', '4561', '2', '17.56', '35.12', '套'],
  ['H边插筋.1', '22', '18', '3593', '7300/3+1200-40+max(6*d,\n150)', '50', '3693', '4', '11.005', '44.02', '电'],
  ['H边插筋.2', '22', '18', '4363', '7300/3+1*max(35*d,\n500)+1200-40+max(6*d,150)', '50', '4463', '4', '13.3', '53.2', '电'],
  ['B边插筋.1', '22', '18', '4363', '7300/3+1*max(35*d,\n500)+1200-40+max(6*d,150)', '50', '4463', '4', '13.3', '53.2', '电'],
  ['B边插筋.2', '22', '18', '3593', '7300/3+1200-40+max(6*d,\n150)', '50', '3693', '4', '11.005', '44.02', '电'],
  ['箍筋.1', '10', '195', '', '2*(960+760)+2*(13.57*d)', '69', '3642', '4', '2.247', '8.988', '绑']
]

const rebarHeads = ['直径(mm)', '级别', '图号', '图形', '计算公式', '公式描述', '弯曲调整', '长度', '根数', '搭接', '损耗(%)', '单重(kg)', '总重(kg)', '钢筋归类', '']

function ShapeDrawing({ length }: { length: string }) {
  if (!length) {
    return (
      <svg width="266" height="55" viewBox="0 0 266 55" fill="none" aria-label="箍筋图形">
        <text x="69" y="36" fontSize="24" fill="#234">760</text>
        <rect x="131" y="3" width="77" height="49" stroke="#000" strokeWidth="2" />
        <text x="133" y="45" fontSize="24" fill="#f22">960</text>
        <path d="M178 18l18-13M192 30l14-17" stroke="#000" strokeWidth="2.400" />
      </svg>
    )
  }
  return (
    <svg width="266" height="55" viewBox="0 0 266 55" fill="none" aria-label="直筋图形">
      <text x="20" y="36" fontSize="16" fill="#222">150</text>
      <path d="M54 18v21h211" stroke="#000" strokeWidth="2" />
      <text x="133" y="30" fontSize="17" fill="#f00">{length}</text>
    </svg>
  )
}

const cell = 'overflow-hidden border-r border-b border-[#d4d4d4] p-0 pb-1 pl-[3px] whitespace-nowrap'

function RebarTable() {
  return (
    <table className="w-full table-fixed border-collapse">
      <colgroup>
        <col className="w-[9px]" />
        <col className="w-[91px]" />
        <col className="w-[70px]" />
        <col className="w-[45px]" />
        <col className="w-[41px]" />
        <col />
        <col className="w-[208px]" />
        <col className="w-[76px]" />
        <col className="w-[48px]" />
        <col className="w-[48px]" />
        <col className="w-[61px]" />
        <col className="w-[77px]" />
        <col className="w-[76px]" />
        <col className="w-[89px]" />
        <col className="w-[92px]" />
        <col className="w-[89px]" />
        <col className="w-[16px]" />
      </colgroup>
      <thead>
        <tr className="h-[26px] bg-[#efefef] text-[#444]">
          <th className="border-r border-b border-[#c8c8c8] p-0" aria-label="序号" />
          <th className="border-r border-b border-[#c8c8c8] bg-[#80bbfb] p-0 font-bold text-white">筋号</th>
          {rebarHeads.map((head) => (
            <th key={head} className="border-r border-b border-[#c8c8c8] p-0 font-normal">
              <div className="flex h-[25px] items-center justify-center overflow-hidden leading-[18px]">
                <span className={head === '弯曲调整' ? '' : 'whitespace-nowrap'}>{head}</span>
              </div>
            </th>
          ))}
        </tr>
      </thead>
      <tbody className="font-['Noto_Sans_CJK_SC',sans-serif] leading-[18px] [font-feature-settings:'hwid']">
        {rebarRows.map(([name, dia, no, label, formula, bend, len, count, unit, total, joint], i) => (
          <tr key={name} className="bg-[#ccffd9] odd:h-[57px] even:h-[58px]">
            <td className={`border-r border-b border-[#c8c8c8] p-0 text-center ${i === 0 ? 'bg-[#80bbfb] font-bold text-white' : 'bg-[#efefef] text-[#555]'}`}>
              {i + 1}
            </td>
            <td className={i === 0 ? "border-t border-r-2 border-b-2 border-[#808080] p-0 pl-[3px] font-['Open_Sans','Noto_Sans_CJK_SC',sans-serif] [font-feature-settings:normal]" : cell}>
              {name}
            </td>
            <td className={cell}>{dia}</td>
            <td className="border-r border-b border-[#d4d4d4] p-0 pl-[6px]"><GradeMark /></td>
            <td className={cell}>{no}</td>
            <td className="overflow-hidden border-r border-b border-[#d4d4d4] p-0 [&_svg]:block"><ShapeDrawing length={label} /></td>
            <td className="overflow-hidden border-r border-b border-[#d4d4d4] p-0 pb-1 pl-[3px] whitespace-pre">{formula}</td>
            <td className="overflow-hidden border-r border-b border-[#d4d4d4] p-0 pb-1 pl-[3px] whitespace-pre">{label && '上层露出\n长度+…'}</td>
            <td className={cell}>{bend}</td>
            <td className={cell}>{len}</td>
            <td className={cell}>{count}</td>
            <td className={cell}>0</td>
            <td className={cell}>0</td>
            <td className={cell}>{unit}</td>
            <td className={cell}>{total}</td>
            <td className={cell}>{label ? '直筋' : '箍筋'}</td>
            <td className={cell}>{joint}</td>
          </tr>
        ))}
        <tr className="h-[26px]">
          <td className="border-r border-b border-[#c8c8c8] bg-[#efefef] p-0 text-center text-[#555]">8</td>
          {Array.from({ length: 16 }, (_, i) => (
            <td key={i} className="border-r border-b border-[#d4d4d4]" />
          ))}
        </tr>
      </tbody>
    </table>
  )
}

function PagerButton({ label, d, off = false }: { label: string; d: string; off?: boolean }) {
  return (
    <button type="button" aria-label={label}>
      <Svg w={12} h={16}>
        <path d={d} stroke={off ? '#aaa' : '#333'} strokeWidth="1.400" />
      </Svg>
    </button>
  )
}

function RebarEditor() {
  return (
    <section className="flex min-h-0 flex-1 flex-col bg-[#efefef]">
      <PanelStrip closable />
      <h2 className="h-[27px] shrink-0 border border-t-0 border-[#c3c7cc] pl-[10px] leading-[25px] text-[#777]">编辑钢筋</h2>
      <div className="mx-[11px] mt-[10px] mb-[11px] flex min-h-0 flex-1 flex-col overflow-hidden border border-[#c3c7cc] bg-white">
        <div className="flex h-[35px] shrink-0 items-center gap-[11px] border-b border-[#c3c7cc] bg-[#efefef] pt-px pl-[9px]">
          <div className="mr-[2px] flex items-center gap-[10px]">
            <PagerButton label="第一个" d="M1 0v16M11 5L5 8.500l6 3.500" off />
            <PagerButton label="上一个" d="M9 5L3 8.500l6 3.500" off />
            <PagerButton label="下一个" d="M3 5l6 3.500L3 12" />
            <PagerButton label="最后一个" d="M11 0v16M1 5l6 3.500L1 12" />
          </div>
          <button type="button" aria-label="上移" className="mr-[2px]">
            <Svg w={17} h={18}>
              <path d="M1 0h15v17H1z" fill="#ddd" stroke="#bbb" />
              <path d="M1 0h15v3H1z" fill="#aaa" />
              <path d="M8.500 15V6M5 9l3.500-4L12 9" stroke="#888" strokeWidth="2" />
            </Svg>
          </button>
          <button type="button" aria-label="下移" className="mr-[2px]">
            <Svg w={17} h={18}>
              <path d="M1 0h15v17H1z" fill="#fff" stroke={GRAY} />
              <path d="M1 0h15v3H1z" fill="#7b8794" />
              <path d="M8.500 5v9M5 11l3.500 4 3.500-4" stroke={BLUE} strokeWidth="2" />
            </Svg>
          </button>
          <ToolButton icon="insert" label="插入" />
          <ToolButton icon="remove" label="删除" />
          <ToolButton icon="scale" label="缩尺配筋" />
          <ToolButton icon="info" label="钢筋信息" />
          <ToolButton icon="library" label="钢筋图库" />
          <ToolButton icon="other" label="其他" caret />
          <span className="-ml-1 whitespace-nowrap text-[#333]">单构件钢筋总重(kg)：266.930</span>
        </div>
        <RebarTable />
        <div className="flex-1">
          <div className="h-full w-[10px] bg-[#efefef]" />
        </div>
        <div className="h-[18px] shrink-0 pt-1 pl-[18px]">
          <div className="h-[10px] w-[74%] rounded-full bg-[#cacaca]" />
        </div>
      </div>
    </section>
  )
}

/* ---------- floating display panel ---------- */

const displayOptions = ['箍筋', '插筋', '上层柱插筋下插长度', '显示其它图元', '显示详细公式']

function DisplayDialog() {
  return (
    <div role="dialog" aria-label="钢筋显示控制面板" className="absolute top-[209px] left-[619px] z-10 h-[235px] w-[214px] border border-[#b9c0cc] bg-[#efefef]">
      <div className="-mx-px -mt-px h-[34px] bg-[#2d80e0] pl-3 leading-[33px] text-white">钢筋显示控制面板</div>
      <fieldset className="mx-[14px] mt-[25px] flex h-[161px] flex-col rounded-[4px] border border-[#bbb] bg-white pt-[6px] pl-[13px]">
        {displayOptions.map((option) => (
          <label key={option} className="flex h-[29px] items-center gap-1 whitespace-nowrap">
            <input type="checkbox" defaultChecked className="peer sr-only" />
            <span className="flex size-[17px] items-center justify-center rounded-[3px] border border-[#58a0f5] peer-checked:bg-[#58a0f5]">
              <Svg w={11} h={9}>
                <path d="M1 4l3.500 3.500L10 1" stroke="#fff" strokeWidth="2.200" />
              </Svg>
            </span>
            {option}
          </label>
        ))}
      </fieldset>
    </div>
  )
}

export default function App() {
  return (
    <div className="relative flex h-screen flex-col overflow-hidden bg-white font-['Open_Sans','Noto_Sans_CJK_SC',sans-serif] text-[15px] leading-5 text-[#1e1e1e]">
      <TitleBar />
      <Ribbon />
      <ComboBar />
      <main className="flex min-h-0 flex-1">
        <NavigationPanel />
        <div className="ml-[5px] flex w-[501px] shrink-0 flex-col gap-[5px]">
          <ComponentListPanel />
          <PropertyPanel />
        </div>
        <div className="w-[5px] shrink-0 pt-[172px]">
          <div className="h-[124px] bg-[#5f6873]" />
        </div>
        <div className="flex min-w-0 flex-1 flex-col">
          <div className="relative h-[466px] shrink-0 overflow-hidden border-b border-[#888]">
            <Scene />
            <ViewToolbar />
          </div>
          <div className="flex h-[5px] shrink-0 justify-center">
            <div className="flex w-[125px] justify-center bg-[#5f6873]">
              <Svg w={8} h={5}>
                <path d="M0 0h8L4 4z" fill="#c5c9ce" />
              </Svg>
            </div>
          </div>
          <RebarEditor />
        </div>
        <div className="w-1 shrink-0 pt-[172px]">
          <div className="h-[124px] bg-[#5f6873]" />
        </div>
      </main>
      <footer className="flex h-[7px] shrink-0 items-end gap-1 bg-[#dcdcde] pl-[852px]">
        <div className="h-[2px] w-8 bg-[#a9a9a9]" />
        <div className="h-[2px] w-11 bg-[#5ba6f8]" />
        <div className="mr-1 ml-1 h-[2px] w-8 bg-[#b9b9b9]" />
        <div className="h-[2px] w-11 bg-[#a9a9a9]" />
        <div className="h-[2px] w-11 bg-[#a9a9a9]" />
        <div className="h-[2px] w-[91px] bg-[#5ba6f8]" />
        <div className="h-[2px] w-[75px] bg-[#a9a9a9]" />
      </footer>
      <DisplayDialog />
    </div>
  )
}
